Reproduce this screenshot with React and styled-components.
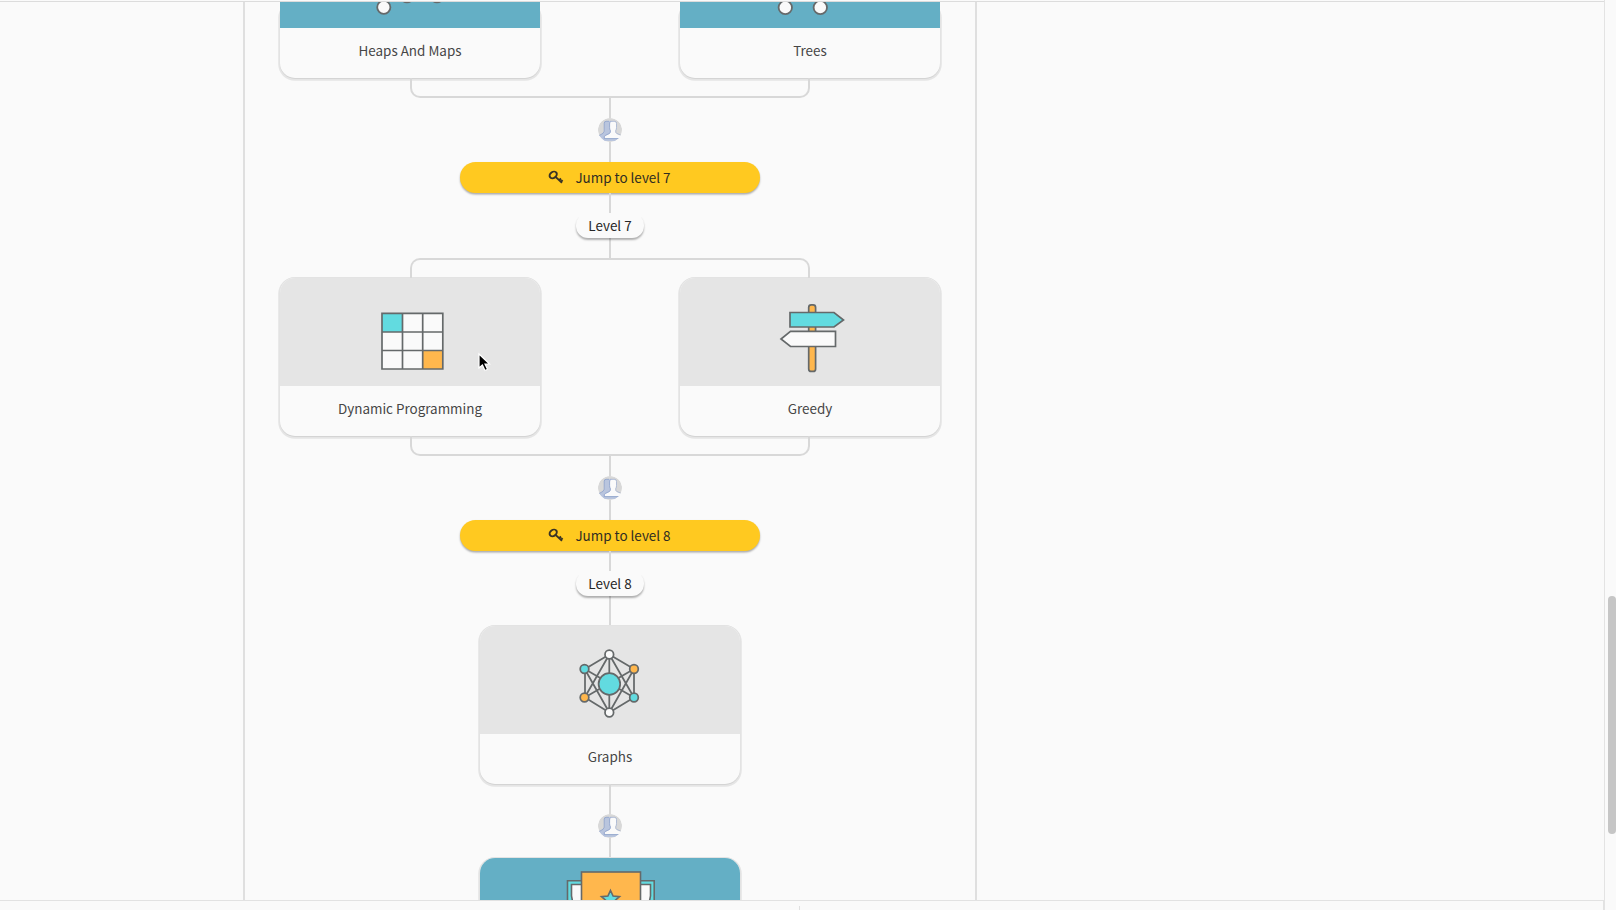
import React from 'react';
import styled, { createGlobalStyle } from 'styled-components';

const LINE = '#d8d8d8';
const INK = '#65696a';
const CYAN = '#62dbe0';
const ORANGE = '#ffb74d';
const PAPER = '#fafafa';

const Global = createGlobalStyle`
  * { box-sizing: border-box; }
  html, body { margin: 0; background: ${PAPER}; overflow: hidden; }
  body { font-family: "Noto Sans CJK SC", "Noto Sans", sans-serif; font-size: 13.44px; color: #333; }
  svg { display: block; }
`;

const Page = styled.div`
  display: grid;
  grid-template-columns: 1fr 12px;
  width: 1616px;
  height: 910px;
`;
const Main = styled.div`
  display: flex;
  flex-direction: column;
  height: 910px;
`;
const Viewport = styled.div`
  margin-top: 1px;
  height: 900px;
  border-top: 1px solid #dcdcdc;
  border-bottom: 1px solid #e2e2e2;
  overflow: hidden;
  padding-left: 243px;
`;
const Track = styled.div`
  display: flex;
  flex-direction: column;
  align-items: center;
  width: 734px;
  height: 1000px;
  border: solid #dfdfdf;
  border-width: 0 2px;
`;
const Footer = styled.div`
  display: flex;
  flex: 1;
  align-items: flex-end;
  padding-left: 799px;
  border-right: 1px solid #e2e2e2;
`;
const FooterTick = styled.div`
  width: 1px;
  height: 4px;
  background: #e0e0e0;
`;
const ScrollRail = styled.div`
  border-left: 1px solid #e3e3e3;
  padding: 596px 0 0 3px;
`;
const ScrollThumb = styled.div`
  width: 8px;
  height: 238px;
  border-radius: 4px;
  background: #c6c6c6;
`;

const CardRow = styled.div`
  display: flex;
  gap: 140px;
  position: relative;
`;
const CardBox = styled.div`
  width: 260px;
  border-radius: 15px;
  background: ${PAPER};
  box-shadow: 0 1px 0 0 #d4d4d4, 0 0 0 1px #e3e3e3, 0 1px 0 1.8px #e5e5e5;
`;
const CardArt = styled.div`
  display: flex;
  justify-content: center;
  height: ${p => p.$height || 108}px;
  border-radius: ${p => (p.$flat ? 0 : '15px 15px 0 0')};
  background: ${p => (p.$open ? '#64afc5' : '#e5e5e5')};
  overflow: hidden;
`;
const CardTitle = styled.div`
  height: 50px;
  line-height: 44px;
  text-align: center;
  color: #464646;
`;
const Stem = styled.div`
  width: 2px;
  height: ${p => p.$h}px;
  flex: none;
  background: ${LINE};
`;
const Join = styled.div`
  position: relative;
  z-index: 1;
  width: 400px;
  height: 20px;
  flex: none;
  border: 2px solid ${LINE};
  ${p => (p.$up
    ? 'border-bottom: 0; border-radius: 10px 10px 0 0;'
    : 'border-top: 0; border-radius: 0 0 10px 10px;')}
`;
const JumpButton = styled.button`
  display: flex;
  align-items: center;
  justify-content: center;
  gap: 11px;
  width: 300px;
  height: 31px;
  flex: none;
  padding: 0 1px 1px 0;
  border: 0;
  border-radius: 16px;
  background: #ffc920;
  box-shadow: 0 1.5px 2px rgba(0, 0, 0, 0.32);
  color: #302d22;
  font: inherit;
`;
const LevelPill = styled.div`
  width: 68px;
  height: 25px;
  flex: none;
  border-radius: 12px;
  background: ${PAPER};
  box-shadow: 0 2px 2px rgba(0, 0, 0, 0.3);
  clip-path: inset(4px -4px -4px -4px);
  line-height: 24px;
  text-align: center;
  color: #262626;
`;
const AvatarSvg = styled.svg`
  flex: none;
  border-radius: 50%;
`;
const Pointer = styled.svg`
  position: absolute;
  left: 197px;
  top: 74px;
`;

const KeyIcon = () => (
  <svg width="16" height="14" viewBox="0 0 16 14" fill="none" stroke="#383326">
    <ellipse cx="5.2" cy="4.9" rx="3.9" ry="3" transform="rotate(-35 5.2 4.9)" strokeWidth="1.9" />
    <path d="M7.800 7.100L14 12.800M11 10.500l2-2M12.800 11.900l1.800-1.800" strokeWidth="1.9" />
  </svg>
);

const Avatar = () => (
  <AvatarSvg width="24" height="24" viewBox="0 0 24 24">
    <circle cx="12" cy="12" r="12" fill={LINE} />
    <path d="M6 5Q6 3 8 3H15V20H21L17 23H6L1 17.500Q6.400 15.500 6.400 12.500Z" fill="#b9c5de" />
    <path d="M11 3.300H8.200Q6.200 3.300 6.200 5.500V10Q6.800 14 5 15.300L1.200 17.500" fill="none" stroke="#93a6cd" strokeWidth=".9" />
    <path d="M11.800 5.500Q12 3.300 15 3.300T18.300 5.500V9.500Q18.300 11.500 17.400 12.700 17.200 15 18.500 15.800L23.500 18 21 20.300H7Q6 18.800 7.500 17.800L11.500 15.800Q12.900 15 12.600 12.700 11.800 11.500 11.800 9.500Z" fill={PAPER} />
    <path d="M12.300 3.800Q11.600 4.500 11.600 6V9.500Q11.600 11.500 12.400 12.700 12.700 15 11 15.700L7.500 17.300Q5.800 18.300 6.200 20.600H20.500" fill="none" stroke="#93a6cd" strokeWidth=".9" />
    <path d="M12 3.300H17Q18.500 3.600 18.500 5.500V9.500Q18.500 11.500 17.700 12.700 17.600 14.900 18.800 15.500L22.500 17" fill="none" stroke="#a3b2d2" strokeWidth=".8" />
  </AvatarSvg>
);

const HeapArt = () => (
  <svg width="260" height="26" viewBox="280 2 260 26" fill={PAPER} stroke={INK} strokeWidth="1.800">
    <circle cx="383.800" cy="7.300" r="6.600" />
    <circle cx="407" cy="-4.200" r="6.600" />
    <circle cx="437" cy="-4.200" r="6.600" />
  </svg>
);
const TreeArt = () => (
  <svg width="260" height="26" viewBox="680 2 260 26" fill={PAPER} stroke={INK} strokeWidth="1.800">
    <circle cx="785.300" cy="7.500" r="6.700" />
    <circle cx="820.300" cy="7.500" r="6.700" />
  </svg>
);
const GridArt = () => (
  <svg width="260" height="108" viewBox="280 278 260 108">
    <rect x="382" y="313.300" width="61" height="55.700" fill={PAPER} />
    <rect x="382" y="313.300" width="20.500" height="18.700" fill={CYAN} />
    <rect x="422.700" y="350.500" width="20" height="18.500" fill={ORANGE} />
    <path d="M382 313.300h60.800V369H382zM402.500 313v56M422.700 313v56M382 332h61M382 350.500h61" fill="none" stroke={INK} strokeWidth="1.700" />
  </svg>
);
const SignArt = () => (
  <svg width="260" height="108" viewBox="680 278 260 108" stroke={INK} strokeWidth="1.700">
    <rect x="808.700" y="304.900" width="6.900" height="66.500" rx="2.500" fill={ORANGE} />
    <path d="M790 312.500h44l9.500 7.500-9.500 7h-44z" fill={CYAN} />
    <path d="M835.500 331.300h-45l-9.500 7.700 9.500 7.500h45z" fill={PAPER} />
  </svg>
);
const GraphArt = () => (
  <svg width="260" height="108" viewBox="480 626 260 108" stroke={INK} strokeWidth="1.750">
    <path fill="none" d="M609.300 654.500L634 669v28.500L609.300 712.500 585 697.500V669zM609.300 654.500v58M584.700 669L634 697.500M634 669L584.700 697.500M609.300 654.500L584.700 697.500M609.300 654.500L634 697.500M609.300 712.500L584.700 669M609.300 712.500L634 669" />
    <circle cx="609.400" cy="684" r="10.800" fill={CYAN} />
    <circle cx="609.300" cy="654.500" r="4.300" fill={PAPER} />
    <circle cx="609.300" cy="712.500" r="4.300" fill={PAPER} />
    <circle cx="584.500" cy="669" r="4.300" fill={CYAN} />
    <circle cx="634" cy="697.500" r="4.300" fill={CYAN} />
    <circle cx="634" cy="669" r="4.300" fill={ORANGE} />
    <circle cx="584.500" cy="697.500" r="4.300" fill={ORANGE} />
  </svg>
);
const TrophyArt = () => (
  <svg width="260" height="108" viewBox="480 858 260 108" stroke={INK} strokeWidth="1.600">
    <path d="M582 880.700h-14.500V910h14.500zM640 880.700h14.200V910H640z" fill={CYAN} />
    <path d="M582 884.500h-10.500V896l2 10h8.500zM640 884.500h10.500V896l-2 10H640z" fill={PAPER} />
    <rect x="581.500" y="872" width="59" height="50" fill={ORANGE} />
    <path d="M610.500 890.500l2.600 5.600 6.400.5-4.800 4.200 1.500 6.200-5.700-3.300-5.700 3.300 1.500-6.200-4.800-4.200 6.400-.5z" fill={CYAN} />
  </svg>
);

const Topic = ({ title, art, open, artHeight }) => (
  <CardBox>
    <CardArt $open={open} $height={artHeight} $flat={!!artHeight}>{art}</CardArt>
    <CardTitle>{title}</CardTitle>
  </CardBox>
);

const LevelGate = ({ level }) => (
  <>
    <Stem $h={20} />
    <Avatar />
    <Stem $h={20} />
    <JumpButton><KeyIcon />Jump to level {level}</JumpButton>
    <Stem $h={20} />
    <LevelPill>Level {level}</LevelPill>
  </>
);

export default function App() {
  return (
    <Page>
      <Global />
      <Main>
        <Viewport>
          <Track>
            <CardRow>
              <Topic title="Heaps And Maps" art={<HeapArt />} open artHeight={26} />
              <Topic title="Trees" art={<TreeArt />} open artHeight={26} />
            </CardRow>
            <Join />
            <LevelGate level={7} />
            <Stem $h={20} />
            <Join $up />
            <CardRow>
              <Topic title="Dynamic Programming" art={<GridArt />} />
              <Topic title="Greedy" art={<SignArt />} />
              <Pointer width="16" height="22" viewBox="0 0 16 22">
                <path d="M2 2v14l3.400-3 2.600 5.500 2.500-1.200L8 12h4.500z" fill="#000" stroke="#fff" strokeWidth="1.200" />
              </Pointer>
            </CardRow>
            <Join />
            <LevelGate level={8} />
            <Stem $h={30} />
            <Topic title="Graphs" art={<GraphArt />} />
            <Stem $h={30} />
            <Avatar />
            <Stem $h={20} />
            <Topic title="" art={<TrophyArt />} open />
          </Track>
        </Viewport>
        <Footer><FooterTick /></Footer>
      </Main>
      <ScrollRail><ScrollThumb /></ScrollRail>
    </Page>
  );
}
